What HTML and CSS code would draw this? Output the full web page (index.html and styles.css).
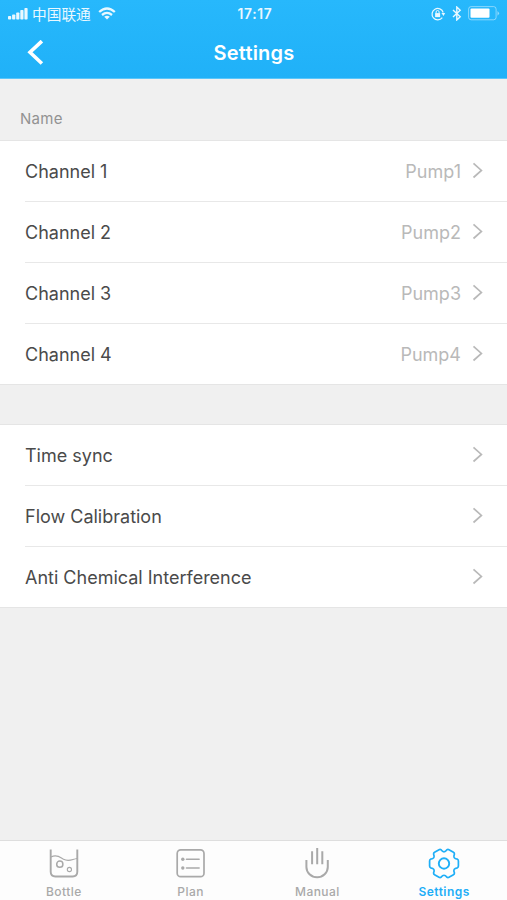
FILE: index.html
```html
<!DOCTYPE html>
<html lang="en">
<head>
<meta charset="utf-8">
<title>Settings</title>
<link rel="stylesheet" href="styles.css">
</head>
<body>
<svg class="defs" width="0" height="0"><symbol id="chevron" viewBox="0 0 12 18"><path d="M1.5 1.3 9.4 8.4 1.5 15.5" fill="none" stroke="currentColor" stroke-width="1.7"/></symbol></svg>
<div class="app">
  <header class="header">
    <div class="status">
      <div class="carrier">
        <svg width="20" height="13" viewBox="0 0 20 13" fill="currentColor"><rect x="0" y="9" width="3.2" height="3.5" rx=".8"/><rect x="4.1" y="7.5" width="3.2" height="5" rx=".8"/><rect x="8.2" y="5.5" width="3.2" height="7" rx=".8"/><rect x="12.3" y="3" width="3.2" height="9.5" rx=".8"/><rect x="16.4" y="1" width="3.2" height="11.5" rx=".8"/></svg>
        <span class="operator">中国联通</span>
        <svg class="wifi" width="18" height="13" viewBox="0 0 18 13" fill="none" stroke="currentColor" stroke-width="2.3"><path d="M1.2 5Q9-2 16.8 5M4 8Q9 3.8 14 8"/><path d="M6.2 9.7Q9 7.6 11.8 9.7L9 12.5Z" fill="currentColor" stroke="none"/></svg>
      </div>
      <span class="time">17:17</span>
      <div class="indicators">
        <svg width="15" height="14" viewBox="0 0 15 14" fill="none" stroke="currentColor"><path d="M11.3 10.6A5.7 5.7 0 1 1 12.2 5.5" stroke-width="1.2"/><path d="m10.4 6 3.8-.1-1.7 3Z" fill="currentColor" stroke="none"/><rect x="4.1" y="6.1" width="5" height="4" fill="currentColor" stroke="none"/><path d="M5.1 6.3V5a1.5 1.5 0 0 1 3 0v1.3"/></svg>
        <svg class="bluetooth" width="10" height="15" viewBox="0 0 10 15" fill="none" stroke="currentColor" stroke-width="1.4"><path d="m1 4 7.2 6.8L4.8 14V1l3.4 3.2L1 11"/></svg>
        <svg class="battery" width="32" height="16" viewBox="0 0 32 16"><rect x=".6" y=".6" width="27.5" height="13.2" rx="2.5" fill="none" stroke="currentColor" opacity=".5"/><rect x="2.5" y="2.6" width="19" height="9.2" rx="1" fill="#fff"/><path d="M29.5 4.9Q32.5 7.3 29.5 9.7Z" fill="currentColor" opacity=".55"/></svg>
      </div>
    </div>
    <div class="titlebar">
      <svg class="back" width="17" height="26" viewBox="0 0 17 26"><path d="M14.9 1.1 3 12.3 14.9 23.5" fill="none" stroke="currentColor" stroke-width="3.6"/></svg>
      <h1>Settings</h1>
    </div>
  </header>
  <main>
    <h2>Name</h2>
    <ul class="list">
      <li><span>Channel 1</span><span class="value">Pump1</span><svg class="chevron"><use href="#chevron"/></svg></li>
      <li><span>Channel 2</span><span class="value">Pump2</span><svg class="chevron"><use href="#chevron"/></svg></li>
      <li><span>Channel 3</span><span class="value">Pump3</span><svg class="chevron"><use href="#chevron"/></svg></li>
      <li><span>Channel 4</span><span class="value">Pump4</span><svg class="chevron"><use href="#chevron"/></svg></li>
    </ul>
    <ul class="list actions">
      <li><span>Time sync</span><svg class="chevron"><use href="#chevron"/></svg></li>
      <li><span>Flow Calibration</span><svg class="chevron"><use href="#chevron"/></svg></li>
      <li><span>Anti Chemical Interference</span><svg class="chevron"><use href="#chevron"/></svg></li>
    </ul>
  </main>
  <nav class="tabs">
    <div class="tab">
      <svg width="32" height="32" viewBox="-17 -16.5 32 32" fill="none" stroke="currentColor"><path d="M-13.3-14V8.3Q-13.3 13-8.6 13H8.6Q13.3 13 13.3 8.3V-14" stroke-width="1.9"/><path d="M-13-6.5C-6-10-3-5-.5-4.2 5-1.4 8-4.2 13-5" stroke-width="1.2"/><circle cx="-4.2" cy=".7" r="3.1" stroke-width="1.5"/><circle cx="5.4" cy="6" r="2.1" stroke-width="1.1"/></svg>
      <span>Bottle</span>
    </div>
    <div class="tab">
      <svg width="32" height="32" viewBox="-16.5 -16.5 32 32" fill="none" stroke="currentColor"><rect x="-13.3" y="-13.6" width="26.8" height="26.8" rx="3.5" stroke-width="1.7"/><path d="M-4-4.3H8.6M-4 4.5H8.6" stroke-width="1.6" stroke-linecap="round"/><g fill="currentColor" stroke="none"><circle cx="-7.7" cy="-4.3" r="1.7"/><circle cx="-7.7" cy="4.5" r="1.7"/></g></svg>
      <span>Plan</span>
    </div>
    <div class="tab">
      <svg width="32" height="32" viewBox="-16 -16 32 32" fill="none" stroke="currentColor" stroke-width="2"><path d="M-10.6-3V4A10.7 10.2 0 0 0 10.8 4V-3M-4.9-11.8V1.2M.2-15V1.2M5.3-11.8V1.2"/></svg>
      <span>Manual</span>
    </div>
    <div class="tab active">
      <svg width="32" height="32" viewBox="-16 -16.5 32 32" fill="none" stroke="currentColor" stroke-width="1.7" stroke-linejoin="round"><path d="M14.4-2.6V2.6Q14.4 3.8 13.4 4.3Q8.4 4.85 10.42 9.45Q10.5 10.57 9.44 11.17L4.96 13.77Q3.9 14.38 2.97 13.75Q0 9.7-2.97 13.75Q-3.9 14.38-4.96 13.77L-9.44 11.17Q-10.5 10.57-10.42 9.45Q-8.4 4.85-13.4 4.3Q-14.4 3.8-14.4 2.6V-2.6Q-14.4-3.8-13.4-4.3Q-8.4-4.85-10.42-9.45Q-10.5-10.57-9.44-11.17L-4.96-13.77Q-3.9-14.38-2.97-13.75Q0-9.7 2.97-13.75Q3.9-14.38 4.96-13.77L9.44-11.17Q10.5-10.57 10.42-9.45Q8.4-4.85 13.4-4.3Q14.4-3.8 14.4-2.6Z"/><circle r="5.2" stroke-width="1.9"/></svg>
      <span>Settings</span>
    </div>
  </nav>
</div>
</body>
</html>
```
FILE: styles.css
```css
* { box-sizing: border-box; }
body { margin: 0; background: #f0f0f0; color: #4a4a4a; font-family: Inter, "Noto Sans CJK SC", sans-serif; }
.defs { position: absolute; }
svg { display: block; flex: none; }
.app { height: 900px; display: flex; flex-direction: column; }
.header { height: 79px; background: linear-gradient(#27b8fc, #20b1f8); border-bottom: 1px solid #5ac6fb; color: #fff; }
.status { height: 27px; padding: 0 7px 0 8px; display: grid; grid-template-columns: 1fr auto 1fr; align-items: center; color: #e9f8ff; }
.carrier, .indicators { display: flex; align-items: center; }
.operator { margin-left: 4px; font: 14.7px/20px "Noto Sans CJK SC", sans-serif; }
.wifi { margin-left: 7px; }
.time { padding-left: 2px; font-size: 13.8px; font-weight: 600; letter-spacing: .65px; }
.indicators { justify-content: flex-end; }
.bluetooth { margin-left: 6px; }
.battery { margin-left: 6px; }
.titlebar { height: 51px; padding: 0 27px; display: grid; grid-template-columns: 1fr auto 1fr; align-items: center; }
h1 { margin: 0; padding-left: 1px; font-size: 20px; line-height: 26px; font-weight: 600; letter-spacing: .2px; }
main { flex: 1; }
h2 { height: 61px; margin: 0; padding: 30px 20px 0; font-size: 15px; line-height: 20px; font-weight: 400; letter-spacing: .3px; color: #929292; }
.list { list-style: none; margin: 0; padding: 0 0 0 25px; background: #fff; border: solid #e5e5e5; border-width: 1px 0; }
.actions { margin-top: 39px; }
.list li { height: 61px; padding-right: 23px; display: flex; align-items: center; font-size: 18px; line-height: 24px; border-bottom: 1px solid #e8e8e8; }
.list li:last-child { height: 60px; border-bottom: 0; }
.list span { padding-top: 2px; }
.value { margin-left: auto; color: #b9b9b9; }
.chevron { width: 12px; height: 18px; margin-left: auto; color: #b9b9b9; }
.value + .chevron { margin-left: 11px; }
.tabs { height: 60px; padding-top: 6px; display: grid; grid-template-columns: repeat(4, 1fr); background: #fdfdfd; border-top: 1px solid #dedede; }
.tab { display: flex; flex-direction: column; align-items: center; color: #a9a9a9; font-size: 12px; line-height: 16px; font-weight: 500; letter-spacing: .45px; }
.tab span { margin-top: 5px; padding-left: 1px; }
.active { color: #1eaef7; font-weight: 600; }
```
